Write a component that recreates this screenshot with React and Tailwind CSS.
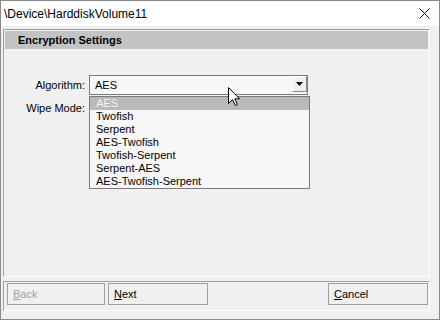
const algorithms = [
  'AES',
  'Twofish',
  'Serpent',
  'AES-Twofish',
  'Twofish-Serpent',
  'Serpent-AES',
  'AES-Twofish-Serpent',
];

const Key = ({ children }) => <span className="underline">{children}</span>;

const WizButton = ({ children, disabled, className = '' }) => (
  <button
    className={`h-[22px] border border-[#a0a0a0] bg-[#f0f0f0] text-left pl-[5px] text-[11px] ${
      disabled ? 'text-[#a0a0a0]' : 'text-black'
    } ${className}`}
  >
    {children}
  </button>
);

const Cursor = () => (
  <svg
    className="absolute left-[227px] top-[86px] z-20"
    width="13"
    height="20"
    viewBox="0 0 13 20"
  >
    <path
      d="M0.5 0.5 L0.5 16.5 L4.5 12.5 L7.2 18.5 L9.4 17.5 L6.8 11.8 L11.5 11.8 Z"
      fill="#fff"
      stroke="#000"
      strokeWidth="1"
      strokeLinejoin="miter"
    />
  </svg>
);

export default function App() {
  return (
    <div className="relative w-[440px] h-[320px] border border-[#8a8a8a] bg-[#f0f0f0] flex flex-col font-['Liberation_Sans',Arial,sans-serif] text-black select-none overflow-hidden">
      {/* title bar */}
      <div className="h-[25px] bg-white flex items-center justify-between pl-[3px] pr-[9px] shrink-0">
        <span className="text-[12px] leading-none">\Device\HarddiskVolume11</span>
        <svg width="11" height="11" viewBox="0 0 11 11">
          <path d="M0.5 0.5 L10.5 10.5 M10.5 0.5 L0.5 10.5" stroke="#111" strokeWidth="1" />
        </svg>
      </div>

      <div className="flex-1 flex flex-col pt-[3px] pl-[2px]">
        {/* settings panel */}
        <div className="w-[427px] h-[248px] border border-t-[#a0a0a0] border-l-[#a0a0a0] border-r-white border-b-white p-[1px]">
          <div className="h-[18px] bg-[#c3c3c3] flex items-center pl-[13px] text-[11px] font-bold">
            Encryption Settings
          </div>

          <div className="mt-[26px] flex flex-col gap-[3px] text-[11px]">
            <div className="flex items-center h-[20px]">
              <span className="w-[80px] text-right">Algorithm:</span>
              <div className="relative ml-[4px] w-[219px] h-[20px] border border-[#7a7a7a] bg-[#f7f7f7] flex items-start">
                <span className="flex-1 pl-[5px] leading-[18px]">AES</span>
                <div className="w-[15px] h-[16px] bg-[#f0f0f0] border border-t-white border-l-white border-r-[#8a8a8a] border-b-[#8a8a8a] flex items-center justify-center">
                  <svg width="7" height="4" viewBox="0 0 7 4">
                    <polygon points="0,0 7,0 3.5,4" fill="#000" />
                  </svg>
                </div>

                {/* open list */}
                <ul className="absolute left-[-1px] top-[20px] w-[221px] border border-[#7a7a7a] bg-[#f7f7f7] z-10">
                  {algorithms.map((a, i) => (
                    <li
                      key={a}
                      className={`h-[13px] leading-[13px] pl-[6px] ${
                        i === 0 ? 'bg-[#b9b9b9] text-[#f4f4f4]' : ''
                      }`}
                    >
                      {a}
                    </li>
                  ))}
                </ul>
              </div>
            </div>
            <div className="flex items-center h-[20px]">
              <span className="w-[80px] text-right">Wipe Mode:</span>
            </div>
          </div>
        </div>

        {/* button strip */}
        <div className="mt-[4px] w-[427px] h-[30px] border border-t-[#a0a0a0] border-l-[#a0a0a0] border-r-white border-b-white pt-[1px] pl-[3px] pr-[1px] flex items-start gap-[3px]">
          <WizButton disabled className="w-[98px]">
            <Key>B</Key>ack
          </WizButton>
          <WizButton className="w-[100px]">
            <Key>N</Key>ext
          </WizButton>
          <WizButton className="w-[100px] ml-auto">
            <Key>C</Key>ancel
          </WizButton>
        </div>
      </div>

      <Cursor />
    </div>
  );
}
